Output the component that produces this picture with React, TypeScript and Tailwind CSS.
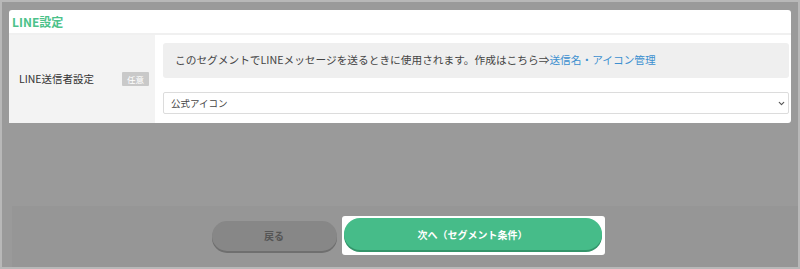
import { ChevronDown } from 'lucide-react'

const font = { fontFamily: '"Noto Sans CJK JP", "Noto Sans", sans-serif' }

export default function App() {
  return (
    <div
      className="w-[800px] h-[269px] bg-[#9a9a9a] border-2 border-[#b8b8b8] flex flex-col overflow-hidden"
      style={font}
    >
      {/* LINE設定 カード */}
      <div className="mx-[7px] mt-[8px] bg-white rounded-[3px] flex flex-col">
        <div className="h-[25px] flex items-center px-[3px] border-b-2 border-[#f0f0f0]">
          <span className="text-[12px] font-bold text-[#4cc28a] leading-none">LINE設定</span>
        </div>
        <div className="flex h-[88px]">
          <div className="w-[146px] bg-[#f3f3f3] flex items-center pl-[10px] pr-[6px] justify-between">
            <span className="text-[10.5px] text-[#333]">LINE送信者設定</span>
            <span className="bg-[#c9c9c9] text-white text-[8.5px] px-[5px] h-[14px] flex items-center rounded-[1px]">任意</span>
          </div>
          <div className="flex-1 pl-[8px] pr-[2px] pt-[8px] flex flex-col">
            <div className="h-[35px] bg-[#efefef] rounded-[3px] flex items-center pl-[12px] text-[10.7px] text-[#444]">
              このセグメントでLINEメッセージを送るときに使用されます。作成はこちら⇒
              <span className="text-[#3d8fd0]">送信名・アイコン管理</span>
            </div>
            <div className="mt-[14px] h-[22px] border border-[#dcdcdc] rounded-[2px] flex items-center justify-between pl-[7px] pr-[2px]">
              <span className="text-[9.5px] text-[#444]">公式アイコン</span>
              <ChevronDown className="w-[9px] h-[9px] text-[#555]" strokeWidth={3} />
            </div>
          </div>
        </div>
      </div>

      {/* フッター */}
      <div className="mt-auto ml-[10px] h-[61px] bg-[#969696] flex items-center justify-center gap-[5px] pl-[6px] pb-[2px]">
        <button className="w-[125px] h-[30px] rounded-full bg-[#878787] shadow-[0_2px_0_#6f6f6f] text-[10px] font-bold text-[#555]">
          戻る
        </button>
        <div className="bg-white rounded-[3px] p-[2px] pb-[5px] pr-[3px]">
          <button className="w-[258px] h-[32px] rounded-full bg-[#46bc89] shadow-[0_2px_0_#34946a] text-[10px] font-bold text-white">
            次へ（セグメント条件）
          </button>
        </div>
      </div>
    </div>
  )
}
